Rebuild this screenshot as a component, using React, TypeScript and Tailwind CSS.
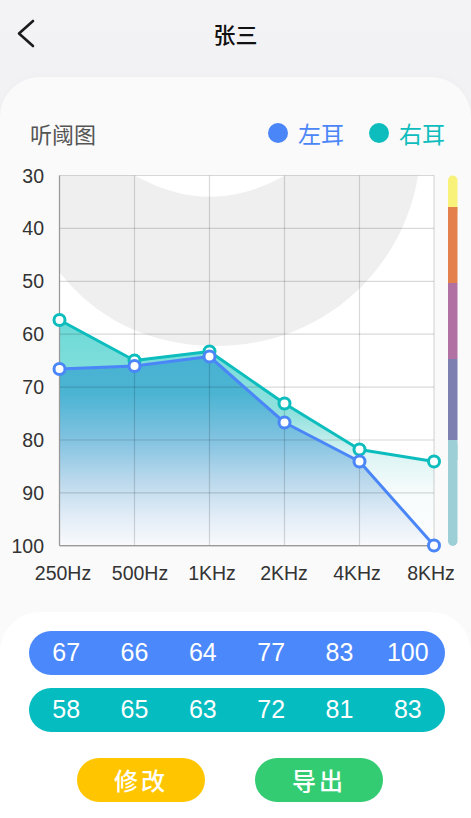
import React from 'react'

const Y0 = 153
const xs = [59.5, 134.5, 209.5, 284.5, 359.5, 434]
const gridYs = [0, 1, 2, 3, 4, 5, 6, 7].map((k) => 175.5 + k * 52.9)
const yLabels = ['30', '40', '50', '60', '70', '80', '90', '100']
const xLabels = [
  { t: '250Hz', x: 63 },
  { t: '500Hz', x: 140 },
  { t: '1KHz', x: 212 },
  { t: '2KHz', x: 284 },
  { t: '4KHz', x: 357 },
  { t: '8KHz', x: 431 },
]

// 图上点位（像素）
const leftPts = [369, 366, 356.5, 422.5, 461.5, 545.5]
const rightPts = [320, 360.5, 351.5, 403.5, 449.5, 461.5]

const leftVals = [67, 66, 64, 77, 83, 100]
const rightVals = [58, 65, 63, 72, 81, 83]

const BLUE = '#4a86f7'
const TEAL = '#0dbdbd'

function line(pts: number[]) {
  return pts.map((y, i) => `${i === 0 ? 'M' : 'L'}${xs[i]},${y}`).join(' ')
}

function area(pts: number[]) {
  return `${line(pts)} L434,545.7 L59.5,545.7 Z`
}

function Chart() {
  return (
    <svg width={471} height={459} viewBox="0 0 471 459" className="block">
      <defs>
        <linearGradient id="tealFill" gradientUnits="userSpaceOnUse" x1="0" y1="320" x2="0" y2="546">
          <stop offset="0" stopColor="#6bdad7" />
          <stop offset="0.42" stopColor="#92e1de" />
          <stop offset="0.6" stopColor="#ddf4f4" />
          <stop offset="0.75" stopColor="#f5fbfb" />
          <stop offset="1" stopColor="#ffffff" />
        </linearGradient>
        <linearGradient id="blueFill" gradientUnits="userSpaceOnUse" x1="0" y1="356" x2="0" y2="546">
          <stop offset="0" stopColor="#48b2d2" />
          <stop offset="0.2" stopColor="#4cb4d3" />
          <stop offset="0.44" stopColor="#82c3e1" />
          <stop offset="0.65" stopColor="#b9d8ec" />
          <stop offset="0.85" stopColor="#e3edf7" />
          <stop offset="1" stopColor="#f9fafc" />
        </linearGradient>
      </defs>
      <g transform={`translate(0,${-Y0})`}>
        <rect x="59.5" y="175.5" width="374.5" height="370.2" fill="#ffffff" />
        {/* 言语香蕉区 */}
        <path
          d="M59.5,175.5 L135,175.5 Q210,218 285,175.5 L418,175.5 C405,262 330,344 220,346 C150,347 95,318 59.5,272 Z"
          fill="#efefef"
        />

        <path d={area(rightPts)} fill="url(#tealFill)" />
        <path d={area(leftPts)} fill="url(#blueFill)" />

        {gridYs.map((y, i) => (
          <line key={'h' + i} x1="59.5" x2="434" y1={y} y2={y} stroke="rgba(0,0,0,0.15)" strokeWidth="1.2" />
        ))}
        {xs.map((x, i) => (
          <line key={'v' + i} x1={x} x2={x} y1="175.5" y2="545.7" stroke="rgba(0,0,0,0.15)" strokeWidth="1.2" />
        ))}
        <line x1="59.5" x2="59.5" y1="175.5" y2="545.7" stroke="#9a9a9a" strokeWidth="1.2" />
        <line x1="59.5" x2="434" y1="545.7" y2="545.7" stroke="#9a9a9a" strokeWidth="1.2" />

        <path d={line(rightPts)} fill="none" stroke={TEAL} strokeWidth="3" strokeLinejoin="round" />
        <path d={line(leftPts)} fill="none" stroke={BLUE} strokeWidth="3" strokeLinejoin="round" />
        {rightPts.map((y, i) => (
          <circle key={'r' + i} cx={xs[i]} cy={y} r="5.5" fill="#fff" stroke={TEAL} strokeWidth="3" />
        ))}
        {leftPts.map((y, i) => (
          <circle key={'l' + i} cx={xs[i]} cy={y} r="5.5" fill="#fff" stroke={BLUE} strokeWidth="3" />
        ))}

        {gridYs.map((y, i) => (
          <text
            key={'yl' + i}
            x="44"
            y={y + 7}
            textAnchor="end"
            fontSize="19.5"
            fill="#333"
            fontFamily="'Liberation Sans', Arial, sans-serif"
          >
            {yLabels[i]}
          </text>
        ))}
        {xLabels.map((l) => (
          <text
            key={l.t}
            x={l.x}
            y="580"
            textAnchor="middle"
            fontSize="19.5"
            fill="#333"
            fontFamily="'Liberation Sans', Arial, sans-serif"
          >
            {l.t}
          </text>
        ))}

        {/* 右侧色条 */}
        <rect x="448" y="175.5" width="9.5" height="40" rx="4.75" fill="#f8f27a" />
        <rect x="448" y="207" width="9.5" height="76" fill="#e4804b" />
        <rect x="448" y="283" width="9.5" height="76" fill="#b171a2" />
        <rect x="448" y="359" width="9.5" height="81" fill="#7b80b1" />
        <rect x="448" y="440" width="9.5" height="106" rx="4.75" fill="#9dd0d6" />
        <rect x="448" y="440" width="9.5" height="20" fill="#9dd0d6" />
      </g>
    </svg>
  )
}

export default function App() {
  const font = { fontFamily: "'Noto Sans CJK SC', 'Liberation Sans', sans-serif" }
  return (
    <div className="w-[471px] h-[818px] overflow-hidden bg-gradient-to-b from-[#f3f3f5] to-[#ececef]" style={font}>
      {/* 顶部导航 */}
      <div className="relative flex h-[66px] items-center justify-center">
        <svg className="absolute left-[14px] top-[18px]" width="24" height="31" viewBox="0 0 24 31">
          <path d="M19,3 L5,15.5 L19,28" fill="none" stroke="#1a1a1a" strokeWidth="2.6" strokeLinecap="round" strokeLinejoin="round" />
        </svg>
        <span className="text-[22px] font-medium text-[#111]">张三</span>
      </div>

      <div className="mt-[11px] rounded-t-[40px] bg-[#fafafa] pt-[36px] shadow-[0_-2px_10px_rgba(0,0,0,0.02)]">
        <div className="flex h-[40px] items-center pl-[30px] pr-[26px]">
          <span className="text-[22px] text-[#555]">听阈图</span>
          <div className="ml-auto flex items-center">
            <span className="h-[20px] w-[20px] rounded-full bg-[#4a86f7]" />
            <span className="ml-[10px] text-[23px] text-[#4a86f7]">左耳</span>
            <span className="ml-[25px] h-[20px] w-[20px] rounded-full bg-[#0dbdbd]" />
            <span className="ml-[10px] text-[23px] text-[#0dbdbd]">右耳</span>
          </div>
        </div>

        <Chart />

        <div className="h-[206px] rounded-t-[40px] bg-white pt-[19px]">
          <div className="ml-[29px] grid h-[44px] w-[416px] grid-cols-6 items-center rounded-full bg-[#4b88fc] px-[3px]">
            {leftVals.map((v, i) => (
              <span key={i} className="text-center text-[25px] text-white" style={{ fontFamily: "'Liberation Sans', Arial, sans-serif" }}>
                {v}
              </span>
            ))}
          </div>
          <div className="ml-[29px] mt-[13px] grid h-[44px] w-[416px] grid-cols-6 items-center rounded-full bg-[#05bcc1] px-[3px]">
            {rightVals.map((v, i) => (
              <span key={i} className="text-center text-[25px] text-white" style={{ fontFamily: "'Liberation Sans', Arial, sans-serif" }}>
                {v}
              </span>
            ))}
          </div>
          <div className="mt-[26px] flex gap-[50px] pl-[77px]">
            <button className="flex h-[44px] w-[128px] items-center justify-center rounded-full bg-[#ffc600] text-[24px] font-medium tracking-[3px] text-white">
              修改
            </button>
            <button className="flex h-[44px] w-[128px] items-center justify-center rounded-full bg-[#34cc72] text-[24px] font-medium tracking-[3px] text-white">
              导出
            </button>
          </div>
        </div>
      </div>
    </div>
  )
}
